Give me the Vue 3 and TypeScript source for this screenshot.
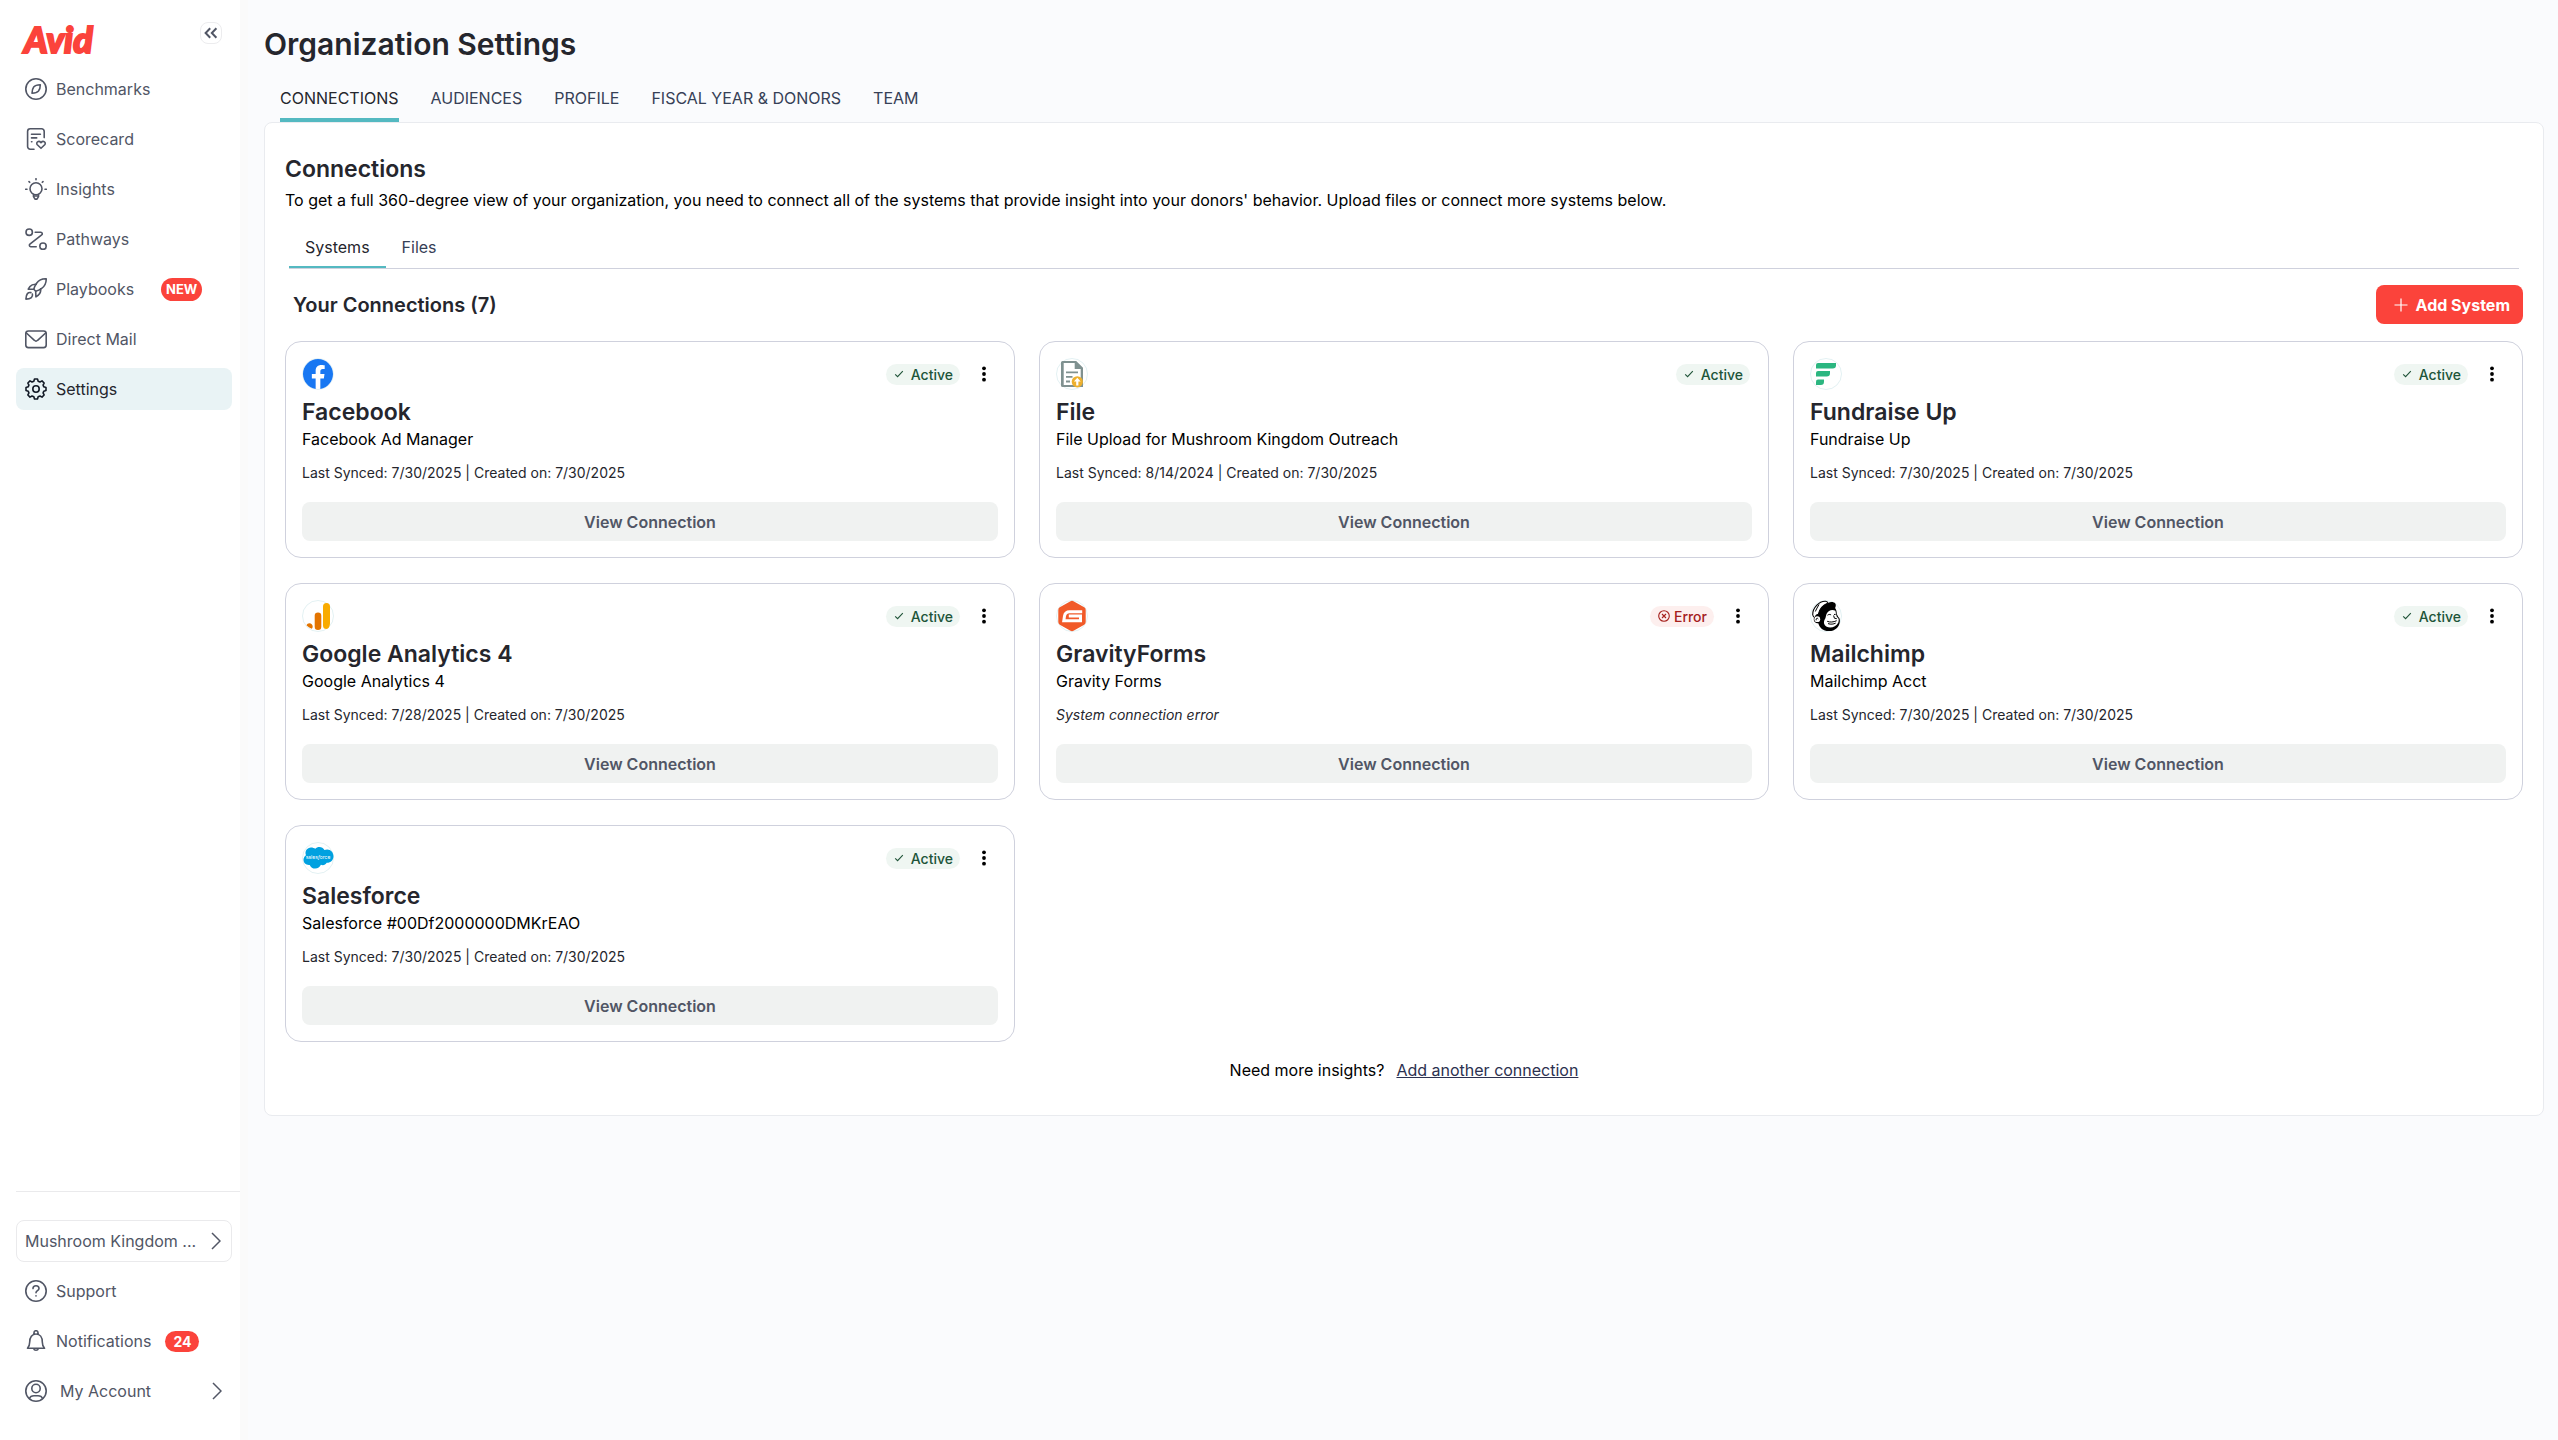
<script setup lang="ts">
type NavItem = { id: string; label: string; badge?: string; active?: boolean }
type Connection = {
  logo: string
  name: string
  detail: string
  synced?: string
  status: 'Active' | 'Error'
  menu: boolean
}

const navItems: NavItem[] = [
  { id: 'benchmarks', label: 'Benchmarks' },
  { id: 'scorecard', label: 'Scorecard' },
  { id: 'insights', label: 'Insights' },
  { id: 'pathways', label: 'Pathways' },
  { id: 'playbooks', label: 'Playbooks', badge: 'NEW' },
  { id: 'mail', label: 'Direct Mail' },
  { id: 'settings', label: 'Settings', active: true },
]

const pageTabs = ['CONNECTIONS', 'AUDIENCES', 'PROFILE', 'FISCAL YEAR & DONORS', 'TEAM']

const connections: Connection[] = [
  { logo: 'facebook', name: 'Facebook', detail: 'Facebook Ad Manager', synced: '7/30/2025', status: 'Active', menu: true },
  { logo: 'file', name: 'File', detail: 'File Upload for Mushroom Kingdom Outreach', synced: '8/14/2024', status: 'Active', menu: false },
  { logo: 'fundraise', name: 'Fundraise Up', detail: 'Fundraise Up', synced: '7/30/2025', status: 'Active', menu: true },
  { logo: 'analytics', name: 'Google Analytics 4', detail: 'Google Analytics 4', synced: '7/28/2025', status: 'Active', menu: true },
  { logo: 'gravity', name: 'GravityForms', detail: 'Gravity Forms', status: 'Error', menu: true },
  { logo: 'mailchimp', name: 'Mailchimp', detail: 'Mailchimp Acct', synced: '7/30/2025', status: 'Active', menu: true },
  { logo: 'salesforce', name: 'Salesforce', detail: 'Salesforce #00Df2000000DMKrEAO', synced: '7/30/2025', status: 'Active', menu: true },
]

// Outline of an eight-toothed gear centred in the 22x22 icon box.
function gearPath(): string {
  const points: string[] = []
  const teeth = 8
  for (let i = 0; i < teeth; i++) {
    const mid = (i / teeth) * Math.PI * 2 - Math.PI / 2
    const corners: [number, number][] = [[-0.27, 8.1], [-0.15, 10.1], [0.15, 10.1], [0.27, 8.1]]
    for (const [turn, radius] of corners) {
      points.push(`${(11 + Math.cos(mid + turn) * radius).toFixed(2)} ${(11 + Math.sin(mid + turn) * radius).toFixed(2)}`)
    }
  }
  return `M${points.join('L')}Z`
}
const gear = gearPath()
</script>

<template>
  <div class="app">
    <aside class="sidebar">
      <div class="brand">
        <a class="brand-name" href="#">Avid</a>
        <button class="collapse" type="button" aria-label="Collapse menu">
          <svg width="14" height="12" viewBox="0 0 14 12"><path d="M6.2 1.2 1.6 6l4.6 4.8M12.4 1.2 7.8 6l4.6 4.8" /></svg>
        </button>
      </div>

      <nav class="nav">
        <a v-for="item in navItems" :key="item.id" href="#" class="nav-item" :class="{ active: item.active }">
          <svg class="icon" viewBox="0 0 22 22">
            <template v-if="item.id === 'benchmarks'">
              <circle cx="11" cy="11" r="10.200" />
              <path d="M15.300 6.700c-3.300.1-5.400.8-6.600 2.200-1 1.300-1.600 3.500-1.700 6.400 3.200-.2 5.300-.9 6.500-2.300 1.200-1.500 1.800-3.400 1.800-6.300Z" />
            </template>
            <template v-else-if="item.id === 'scorecard'">
              <path d="M9 21.200H5.200a2.600 2.600 0 0 1-2.600-2.600V3.400A2.600 2.600 0 0 1 5.200.8h11.400a2.600 2.600 0 0 1 2.600 2.600V9.600" />
              <path d="M6.500 6.200h8.900M6.500 9.900h5.200M6.500 13.700h.4M16 20.300l-3.700-3.600c-1.800-2 1.300-4.800 3.700-2.100 2.400-2.700 5.500.1 3.700 2.100Z" />
            </template>
            <template v-else-if="item.id === 'insights'">
              <circle cx="11" cy="10.700" r="6" />
              <path d="M11 .7v1M4 3.600l.7.7M18 3.600l-.7.7M.7 11.300h1.300M20 11.300h1.300M8.500 16.300v2.400l1.500 2.400h2l1.500-2.400v-2.400M8.700 18h4.600" />
            </template>
            <template v-else-if="item.id === 'pathways'">
              <circle cx="4.200" cy="4.200" r="3.200" />
              <circle cx="18" cy="18.200" r="3.200" />
              <path d="M10.200 4.200h5.500a1.500 1.500 0 0 1 1 2.700L4.900 16.200a1.400 1.400 0 0 0 .8 2.500h5.500" />
            </template>
            <template v-else-if="item.id === 'playbooks'">
              <path d="M21.200.8c-4.200-.1-7.500 1.500-9.600 4.500-1.400 2-2.300 3.900-2.800 6l1.900 1.900c2.200-.5 4.100-1.400 6-2.800 3-2.100 4.600-5.400 4.500-9.600Z" />
              <path d="M11.200 6.300c-2.900-.2-5 .7-6.200 2.200l-1.800 2.600 5.600.2M15.700 10.800c.2 2.900-.7 5-2.200 6.200l-2.600 1.800-.2-5.600M5.900 14.600c-2.800-.6-4.800 1.200-5 6.500 5.300-.2 7.100-2.200 6.500-5" />
            </template>
            <template v-else-if="item.id === 'mail'">
              <rect x=".8" y="3" width="20.400" height="16.600" rx="2.600" />
              <path d="m1.400 5 8 7.300a2.300 2.300 0 0 0 3.200 0l8-7.300" />
            </template>
            <template v-else>
              <path :d="gear" />
              <circle cx="11" cy="11" r="3.200" />
            </template>
          </svg>
          <span>{{ item.label }}</span>
          <span v-if="item.badge" class="badge badge-new">{{ item.badge }}</span>
        </a>
      </nav>

      <div class="account">
        <button class="org" type="button">
          <span>Mushroom Kingdom ...</span>
          <svg class="chevron" viewBox="0 0 10 18"><path d="m1 1 8 8-8 8" /></svg>
        </button>
        <a href="#" class="nav-item">
          <svg class="icon" viewBox="0 0 22 22">
            <circle cx="11" cy="11" r="10.200" />
            <path d="M8 8.600c0-1.700 1.300-2.800 3-2.800s3 1.100 3 2.700c0 2.200-3 2.200-3 4.300M11 15.700v.3" />
          </svg>
          <span>Support</span>
        </a>
        <a href="#" class="nav-item">
          <svg class="icon" viewBox="0 0 22 22">
            <path d="M2.500 18.300c1.500-1.600 2.200-3.300 2.200-6.300 0-4.600 2.300-8 6.300-8s6.300 3.400 6.300 8c0 3 .7 4.700 2.200 6.300ZM8.600 18.500a2.500 2.500 0 0 0 4.800 0M9 4.200V2.700a2 2 0 0 1 4 0v1.500" />
          </svg>
          <span>Notifications</span>
          <span class="badge badge-count">24</span>
        </a>
        <a href="#" class="nav-item profile">
          <svg class="icon" viewBox="0 0 22 22">
            <circle cx="11" cy="11" r="10.200" />
            <circle cx="11" cy="8.500" r="4.200" />
            <path d="M4.400 18.600c.8-2.300 2.300-2.900 4.600-2.900h4c2.300 0 3.800.6 4.600 2.900" />
          </svg>
          <span>My Account</span>
          <svg class="chevron" viewBox="0 0 10 18"><path d="m1 1 8 8-8 8" /></svg>
        </a>
      </div>
    </aside>

    <main class="main">
      <h1>Organization Settings</h1>
      <nav class="page-tabs">
        <a v-for="(tab, i) in pageTabs" :key="tab" href="#" :class="{ current: i === 0 }">{{ tab }}</a>
      </nav>

      <section class="panel">
        <h2>Connections</h2>
        <p class="intro">To get a full 360-degree view of your organization, you need to connect all of the systems that provide insight into your donors' behavior. Upload files or connect more systems below.</p>

        <div class="sub-tabs">
          <button type="button" class="current">Systems</button>
          <button type="button">Files</button>
        </div>

        <div class="list-head">
          <h3>Your Connections (7)</h3>
          <button type="button" class="add">
            <svg width="14" height="14" viewBox="0 0 14 14"><path d="M7 .5v13M.5 7h13" /></svg>
            <span>Add System</span>
          </button>
        </div>

        <div class="grid">
          <article v-for="c in connections" :key="c.name" class="card">
            <div class="card-head">
              <svg class="logo" viewBox="0 0 32 32">
                <circle class="ring" cx="16" cy="16" r="15.500" />
                <g v-if="c.logo === 'facebook'" transform="translate(1 1) scale(1.875)">
                  <path fill="#1877f2" d="M16 8.049c0-4.446-3.582-8.050-8-8.050C3.580 0-.002 3.603-.002 8.050c0 4.017 2.926 7.347 6.750 7.951v-5.625h-2.030V8.050H6.750V6.275c0-2.017 1.195-3.131 3.022-3.131.876 0 1.791.157 1.791.157v1.980h-1.009c-.993 0-1.303.621-1.303 1.258v1.510h2.218l-.354 2.326H9.250V16c3.824-.604 6.750-3.934 6.750-7.951" />
                </g>
                <g v-else-if="c.logo === 'file'">
                  <path fill="#7f9190" fill-rule="evenodd" d="M6.500 3h13.700L27 9.800V29H6.500A1.500 1.500 0 0 1 5 27.500v-23A1.500 1.500 0 0 1 6.500 3Zm1.200 2v22h17V11h-6V5Z" />
                  <path fill="none" stroke="#7f9190" stroke-width="1.800" d="M10 14.300h12M10 18.900h6.500M10 23.500h4" />
                  <circle cx="21.300" cy="23.800" r="5.600" fill="#edb02e" />
                  <path fill="#fff" d="m21.300 19.700 3.400 3.800h-2.300v4h-2.200v-4h-2.300Z" />
                </g>
                <g v-else-if="c.logo === 'fundraise'" fill="#2bb680">
                  <path d="M8 5h18v2.200A3.300 3.300 0 0 1 22.700 10.500H6V7a2 2 0 0 1 2-2Z" />
                  <path d="M8 13h12v2.200a3.300 3.300 0 0 1-3.300 3.300H6V15a2 2 0 0 1 2-2Z" />
                  <path d="M8 21.500h6v2.300a3.200 3.200 0 0 1-3.200 3.200H6v-3.500a2 2 0 0 1 2-2Z" />
                </g>
                <g v-else-if="c.logo === 'analytics'">
                  <path fill="#f9ab00" d="M21 6.500A3.500 3.500 0 0 1 24.500 3 3.500 3.500 0 0 1 28 6.500v16.400c0 3-1.500 6-3.500 6a3.500 3.500 0 0 1-3.500-3.500Z" />
                  <rect x="12.700" y="12.500" width="6.600" height="17.500" rx="3.300" fill="#e37400" />
                  <path fill="#e37400" d="M4.500 25.300c.5-1.300 1.600-2.100 2.900-2.100 1.800 0 3.300 1.500 3.300 3.300 0 1-.3 1.700-.9 2.300-2.100-.7-4-2-5.300-3.500Z" />
                </g>
                <g v-else-if="c.logo === 'gravity'">
                  <path fill="#f15a29" d="M14.500 1.300a3 3 0 0 1 3 0l10.700 6a3 3 0 0 1 1.500 2.600v12.200a3 3 0 0 1-1.500 2.600l-10.700 6a3 3 0 0 1-3 0l-10.700-6a3 3 0 0 1-1.500-2.600V9.900a3 3 0 0 1 1.500-2.600Z" />
                  <path fill="none" stroke="#fff" stroke-width="3" d="M26.200 11.700H13.500c-3 0-4.500 1.600-5 4.300l-.7 4.700h16.700v-4.600H12.800" />
                </g>
                <g v-else-if="c.logo === 'mailchimp'">
                  <path fill="#000" d="M9 10.500C10.500 6.500 14 4 18 3c2.500-1.400 6-1.200 7.300.6.800 1.300.6 2.900-.2 4.300 1.500 1.800 1.600 4 1.700 6l1.500 3c1.700 1 1.700 3 1.500 5-.8 5.300-4.800 8.900-10.500 9.200-5.800.3-9.600-3-11-7.800-3 0-4.900-2.200-4.500-4.900.3-2.400 2-4.300 4.200-4.400Z" />
                  <path fill="#fff" stroke="#000" stroke-width="1.100" d="M2.700 14.800C2.400 8 9.200 1 15.500 1.300c1.500.1 2.300.9 2.500 1.800-5 2-8.500 6-9.600 11.100-1.900.2-3 1.500-3 3.600-1.600-.3-2.500-1.200-2.700-3Z" />
                  <path fill="#fff" d="M16.500 14c1.800-3.600 5.500-5 8.900-3.300.5 2 .7 4.200 1.500 6.300 2 1 2.300 3.300 1.300 5.800-2 4.200-7.700 5.900-11.500 4-3-1.700-3.300-4.700-2-7.200 1.300-1.900 1-3.600 1.800-5.600Z" />
                  <path fill="none" stroke="#000" stroke-width="1" d="M17.500 15.200c1-.9 2.500-1 3.600-.3M24 14.500l1.700-.2M23.600 15.500l.8 2.700 2.400.5M17.200 21.300c3 1.200 6 .9 9.500-.6M18 23.600c2.800 1 5.500.6 7.700-.5M9 4.500c-1.300 2.500-2.700 4.500-3.700 7" />
                  <circle cx="7.300" cy="19.200" r="2.900" fill="#fff" />
                  <path fill="none" stroke="#000" stroke-width="1" d="M6.200 20.300c-.5-1.900 1.100-2.800 2.100-1.300" />
                </g>
                <g v-else>
                  <path fill="#00a1e0" d="M13.300 6.800c1-1.100 2.500-1.700 4.100-1.700 2.200 0 4 1.200 5 3a6.800 6.800 0 0 1 2.800-.6c3.700 0 6.300 3 6.300 6.800s-3 6.700-6.800 6.500c-1.200 2.200-3.600 2.900-5.800 2-1 2.400-3.100 3.800-5.600 3.800-2.600 0-4.600-1.300-5.600-3.700-3.600.4-6.200-1.900-6.200-5.100 0-2 1-3.600 2.500-4.600-1.600-4.100 1.200-7.800 5-7.800 1.700 0 3.300.6 4.300 1.400Z" />
                  <text x="16" y="17" text-anchor="middle" fill="#fff" font-size="5">sales<tspan font-style="italic">f</tspan>orce</text>
                </g>
              </svg>
              <div class="card-tools">
                <span class="status" :class="{ error: c.status === 'Error' }">
                  <svg v-if="c.status === 'Active'" width="10" height="10" viewBox="0 0 10 10"><path d="m1.200 5.300 2.400 2.400 5.200-5.500" /></svg>
                  <svg v-else width="12" height="12" viewBox="0 0 12 12"><circle cx="6" cy="6" r="5.300" /><path d="m4 4 4 4M8 4 4 8" /></svg>
                  {{ c.status }}
                </span>
                <button v-if="c.menu" type="button" class="kebab" :aria-label="`${c.name} options`">
                  <svg width="18" height="18" viewBox="0 0 18 18"><circle cx="9" cy="3.300" r="1.900" /><circle cx="9" cy="9" r="1.900" /><circle cx="9" cy="14.700" r="1.900" /></svg>
                </button>
              </div>
            </div>
            <h4>{{ c.name }}</h4>
            <p class="detail">{{ c.detail }}</p>
            <p v-if="c.synced" class="meta">Last Synced: {{ c.synced }} | Created on: 7/30/2025</p>
            <p v-else class="meta failed">System connection error</p>
            <button type="button" class="view">View Connection</button>
          </article>
        </div>

        <p class="more">
          <span>Need more insights?</span>
          <a href="#">Add another connection</a>
        </p>
      </section>
    </main>
  </div>
</template>

<style>
body {
  margin: 0;
  background: #fafbfd;
}
</style>

<style scoped>
* {
  box-sizing: border-box;
}
.app {
  display: flex;
  min-height: 100vh;
  background: #fafbfd;
  color: #25262d;
  font-family: Inter, "Liberation Sans", sans-serif;
  font-size: 16px;
  line-height: 24px;
}
h1, h2, h3, h4, p {
  margin: 0;
  font-weight: 600;
}
p {
  font-weight: 400;
}
button {
  padding: 0;
  border: 0;
  background: none;
  color: inherit;
  font: inherit;
  cursor: pointer;
}
a {
  color: inherit;
  text-decoration: none;
}
svg {
  display: block;
  flex: none;
}

.sidebar {
  display: flex;
  flex: none;
  flex-direction: column;
  width: 240px;
  padding: 20px 0 28px 16px;
  background: #fff;
  box-shadow: 8px 0 0 #fafafa;
  color: #515665;
}
.brand {
  display: flex;
  align-items: flex-start;
  justify-content: space-between;
  height: 48px;
  padding: 2px 18px 0 8px;
}
.brand-name {
  color: #fb433b;
  font-family: Lato, Inter, sans-serif;
  font-size: 36px;
  font-style: italic;
  font-weight: 900;
  line-height: 34px;
  -webkit-text-stroke: 2px #fb433b;
}
.collapse {
  display: flex;
  align-items: center;
  justify-content: center;
  width: 22px;
  height: 22px;
  border: 1px solid #ececee;
  border-radius: 8px;
}
.collapse svg {
  fill: none;
  stroke: #515665;
  stroke-width: 2;
}
.nav,
.account {
  display: flex;
  flex-direction: column;
  gap: 8px;
  padding-right: 8px;
}
.nav-item {
  display: flex;
  align-items: center;
  height: 42px;
  padding: 0 9px;
  border-radius: 8px;
}
.nav-item.active {
  background: #e9f3f5;
  color: #25262d;
}
.icon {
  width: 22px;
  height: 22px;
  margin-right: 9px;
  fill: none;
  stroke: currentColor;
  stroke-width: 1.600;
  stroke-linecap: round;
  stroke-linejoin: round;
}
.active .icon {
  color: #131a26;
}
.badge {
  border-radius: 12px;
  background: #fb433b;
  color: #fff;
  font-weight: 700;
  text-align: center;
}
.badge-new {
  width: 41px;
  margin-left: 27px;
  font-size: 13px;
  line-height: 23px;
}
.badge-count {
  width: 34px;
  margin-left: 14px;
  font-size: 14px;
  line-height: 21px;
}
.account {
  position: relative;
  margin-top: auto;
  padding-top: 29px;
}
.account::before {
  position: absolute;
  top: 0;
  right: 0;
  left: 0;
  border-top: 1px solid #eaeaec;
  content: "";
}
.org {
  display: flex;
  align-items: center;
  justify-content: space-between;
  height: 42px;
  padding: 0 10px 0 8px;
  border: 1px solid #eaeaec;
  border-radius: 8px;
}
.chevron {
  width: 10px;
  height: 18px;
  fill: none;
  stroke: #515665;
  stroke-width: 1.500;
}
.profile .icon {
  margin-right: 13px;
}
.profile .chevron {
  margin-left: auto;
  margin-right: 1px;
}

.main {
  flex: 1;
  min-width: 0;
  padding: 24px 14px 24px 24px;
}
h1 {
  font-size: 30px;
  line-height: 40px;
}
.page-tabs {
  display: flex;
  gap: 32px;
  margin-top: 22px;
  padding-left: 16px;
  color: #364056;
}
.page-tabs a {
  padding-bottom: 8px;
  border-bottom: 4px solid transparent;
}
.page-tabs .current {
  border-color: #54b9c1;
  color: #25262d;
}
.panel {
  padding: 31px 20px 33px;
  border: 1px solid #e9ebef;
  border-radius: 8px;
  background: #fff;
}
h2 {
  font-size: 23px;
  line-height: 30px;
}
.intro {
  margin-top: 4px;
  color: #000;
}
.sub-tabs {
  display: flex;
  margin: 23px 4px 0;
  border-bottom: 1px solid #cfd1dd;
  color: #364056;
}
.sub-tabs button {
  padding: 0 16px 7px;
  border-bottom: 2px solid transparent;
}
.sub-tabs .current {
  border-color: #54b9c1;
  color: #25262d;
}
.list-head {
  display: flex;
  align-items: center;
  justify-content: space-between;
  margin-top: 16px;
  padding-left: 8px;
}
h3 {
  font-size: 20px;
  line-height: 28px;
}
.add {
  display: flex;
  align-items: center;
  gap: 8px;
  height: 39px;
  padding: 0 13px 0 18px;
  border-radius: 8px;
  background: #fb433b;
  color: #fff;
  font-weight: 700;
}
.add svg {
  fill: none;
  stroke: #fff;
  stroke-width: 1.200;
}
.grid {
  display: grid;
  grid-template-columns: repeat(3, minmax(0, 1fr));
  gap: 25px 24px;
  margin-top: 17px;
}
.card {
  padding: 16px;
  border: 1px solid #cfd1dd;
  border-radius: 16px;
  background: #fff;
}
.card-head,
.card-tools {
  display: flex;
  align-items: center;
  justify-content: space-between;
}
.card-head {
  margin-bottom: 7px;
}
.logo {
  width: 32px;
  height: 32px;
}
.ring {
  fill: none;
  stroke: #e3f1f3;
}
.status {
  display: flex;
  align-items: center;
  gap: 7px;
  height: 21px;
  margin-right: 2px;
  padding: 0 7px 0 8px;
  border-radius: 11px;
  background: #eff6f2;
  color: #205439;
  font-size: 14px;
  font-weight: 500;
  line-height: 21px;
}
.status svg {
  fill: none;
  stroke: currentColor;
  stroke-width: 1.100;
}
.status.error {
  gap: 4px;
  background: #fdefee;
  color: #a5211d;
}
.kebab {
  display: flex;
  align-items: center;
  justify-content: center;
  width: 28px;
  height: 28px;
  margin-left: 8px;
}
h4 {
  font-size: 23px;
  line-height: 30px;
}
.detail {
  color: #000;
}
.meta {
  margin-top: 12px;
  font-size: 14px;
  line-height: 20px;
}
.failed {
  font-style: italic;
}
.view {
  display: block;
  width: 100%;
  height: 39px;
  margin-top: 19px;
  border-radius: 8px;
  background: #f0f2f1;
  color: #515665;
  font-weight: 600;
}
.more {
  display: flex;
  justify-content: center;
  gap: 12px;
  margin-top: 16px;
  color: #000;
}
.more a {
  color: #2c3150;
  text-decoration: underline;
}
</style>
